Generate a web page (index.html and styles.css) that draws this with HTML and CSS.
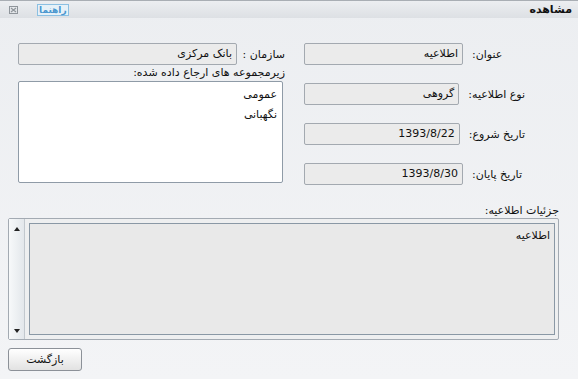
FILE: index.html
```html
<!DOCTYPE html>
<html lang="fa">
<head>
<meta charset="utf-8">
<title>مشاهده</title>
<link rel="stylesheet" href="styles.css">
</head>
<body>
<div class="window">
  <div class="titlebar">
    <div class="tools">
      <span class="close-wrap"><svg class="close" width="9" height="8" viewBox="0 0 9 8"><rect x="0.5" y="0.5" width="8" height="7" fill="none" stroke="#8f959b"/><path d="M2 2 L7 6 M7 2 L2 6" stroke="#8f959b" stroke-width="1.2"/></svg></span>
      <span class="help">راهنما</span>
    </div>
    <div class="title">مشاهده</div>
  </div>

  <div class="fields">
    <div class="col-left">
      <div class="row">
        <div class="input">بانک مرکزی</div>
        <div class="label label-end">سازمان :</div>
      </div>
      <div class="sublabel">زیرمجموعه های ارجاع داده شده:</div>
      <div class="listbox">
        <div class="item">عمومی</div>
        <div class="item">نگهبانی</div>
      </div>
    </div>
    <div class="col-right">
      <div class="row">
        <div class="input wide">اطلاعیه</div>
        <div class="label">عنوان:</div>
      </div>
      <div class="row">
        <div class="input wide">گروهی</div>
        <div class="label">نوع اطلاعیه:</div>
      </div>
      <div class="row">
        <div class="input wide">1393/8/22</div>
        <div class="label">تاریخ شروع:</div>
      </div>
      <div class="row">
        <div class="input wide">1393/8/30</div>
        <div class="label">تاریخ پایان:</div>
      </div>
    </div>
  </div>

  <div class="details-label">جزئیات اطلاعیه:</div>
  <div class="details">
    <div class="scrollbar">
      <span class="arrow up"></span>
      <span class="arrow down"></span>
    </div>
    <div class="details-body">
      <div class="textarea">اطلاعیه</div>
    </div>
  </div>

  <div class="actions">
    <button class="btn">بازگشت</button>
  </div>
</div>
</body>
</html>
```

FILE: styles.css
```css
html, body {
  margin: 0;
  padding: 0;
}
body {
  width: 578px;
  height: 379px;
  overflow: hidden;
  background: #f0f2f4;
  font-family: "DejaVu Sans", "Noto Sans", sans-serif;
  font-size: 11px;
  color: #111;
}
.window {
  width: 578px;
  height: 379px;
  display: flex;
  flex-direction: column;
  background: linear-gradient(#eceef1, #f3f4f6);
}
.titlebar {
  height: 17px;
  border-top: 1px solid #a9aeb4;
  background: linear-gradient(#eceef1, #dde0e4);
  display: flex;
  align-items: center;
  justify-content: space-between;
  padding: 0 6px 0 9px;
}
.tools {
  display: flex;
  flex-direction: row;
  align-items: center;
  gap: 19px;
}
.close-wrap {
  display: block;
  width: 9px;
  height: 8px;
}
.close {
  display: block;
}
.help {
  direction: rtl;
  font-size: 9px;
  font-weight: bold;
  color: #4b97cf;
  border: 1px solid #8cc0e2;
  background: #e6f1f8;
  padding: 0 1px;
  line-height: 10px;
}
.title {
  direction: rtl;
  font-weight: bold;
  font-size: 11px;
  color: #111;
}
.fields {
  display: flex;
  padding: 25px 0 0 18px;
  gap: 19px;
}
.col-left {
  width: 267px;
  display: flex;
  flex-direction: column;
}
.col-right {
  width: 221px;
  display: flex;
  flex-direction: column;
  gap: 18px;
}
.row {
  display: flex;
  align-items: center;
  height: 22px;
}
.input {
  box-sizing: border-box;
  width: 219px;
  height: 22px;
  border: 1px solid #a3a9b0;
  border-radius: 2px;
  background: #ebebeb;
  direction: rtl;
  text-align: right;
  padding-right: 4px;
  line-height: 20px;
  white-space: nowrap;
}
.input.wide {
  width: 159px;
}
.label {
  direction: rtl;
  text-align: left;
  flex: 1;
  padding-left: 9px;
  white-space: nowrap;
}
.label.label-end {
  text-align: right;
  padding-left: 0;
}
.sublabel {
  direction: rtl;
  text-align: right;
  height: 16px;
  line-height: 16px;
}
.listbox {
  box-sizing: border-box;
  width: 265px;
  height: 102px;
  background: #fff;
  border: 1px solid #8f9ba7;
  border-radius: 2px;
  padding: 3px 5px 0 0;
  direction: rtl;
}
.item {
  line-height: 20px;
  text-align: right;
}
.details-label {
  direction: rtl;
  text-align: right;
  padding-right: 19px;
  margin-top: 19px;
  height: 14px;
  line-height: 14px;
}
.details {
  box-sizing: border-box;
  margin-left: 8px;
  width: 551px;
  height: 122px;
  border: 1px solid #a3aab2;
  border-radius: 2px;
  display: flex;
  background: #eeeff0;
}
.scrollbar {
  width: 16px;
  border-right: 1px solid #c2c8ce;
  background: linear-gradient(90deg, #f7f9fa, #e3e7eb);
  display: flex;
  flex-direction: column;
  justify-content: space-between;
  align-items: center;
  padding: 8px 0 6px;
  box-sizing: border-box;
}
.arrow {
  width: 0;
  height: 0;
  border-left: 3px solid transparent;
  border-right: 3px solid transparent;
}
.arrow.up {
  border-bottom: 4px solid #222;
}
.arrow.down {
  border-top: 4px solid #222;
}
.details-body {
  flex: 1;
  padding: 4px 3px 4px 4px;
  display: flex;
}
.textarea {
  flex: 1;
  box-sizing: border-box;
  border: 1px solid #8a98a5;
  background: #e9e9e9;
  direction: rtl;
  text-align: right;
  padding: 5px 4px 0 0;
  line-height: 14px;
}
.actions {
  padding: 8px 0 0 8px;
}
.btn {
  box-sizing: border-box;
  width: 74px;
  height: 23px;
  border: 1px solid #8c9198;
  border-radius: 3px;
  background: linear-gradient(#ffffff, #e2e2e2);
  font-family: "DejaVu Sans", "Noto Sans", sans-serif;
  font-size: 11px;
  color: #111;
  direction: rtl;
  padding: 0;
}
```
